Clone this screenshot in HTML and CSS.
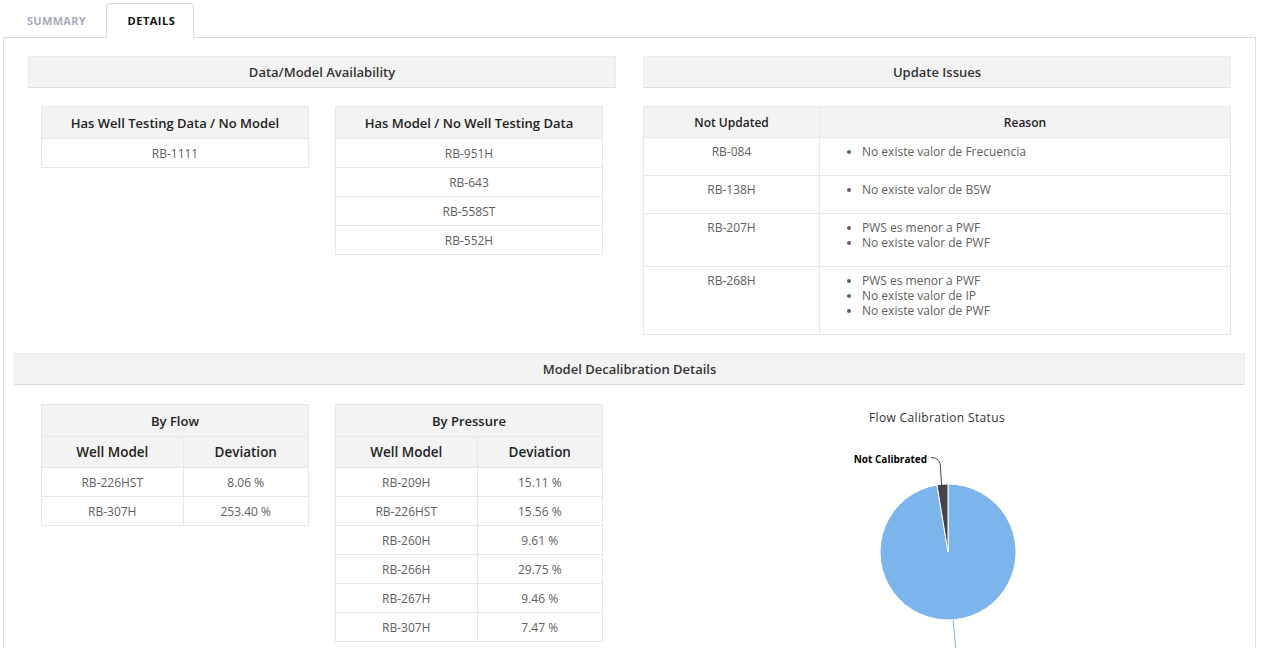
FILE: index.html
```html
<!DOCTYPE html>
<html>
<head>
<meta charset="utf-8">
<title>Details</title>
<link rel="stylesheet" href="styles.css">
</head>
<body>
<div class="page">
  <ul class="tabs">
    <li class="tab">Summary</li>
    <li class="tab active">Details</li>
  </ul>
  <div class="panel">
    <div class="top-row">
      <section class="half">
        <div class="section-head">Data/Model Availability</div>
        <div class="pair">
          <div class="sub">
            <table class="grid">
              <tr><th>Has Well Testing Data / No Model</th></tr>
              <tr><td>RB-1111</td></tr>
            </table>
          </div>
          <div class="sub">
            <table class="grid">
              <tr><th>Has Model / No Well Testing Data</th></tr>
              <tr><td>RB-951H</td></tr>
              <tr><td>RB-643</td></tr>
              <tr><td>RB-558ST</td></tr>
              <tr><td>RB-552H</td></tr>
            </table>
          </div>
        </div>
      </section>
      <section class="half">
        <div class="section-head">Update Issues</div>
        <table class="grid issues">
          <tr><th class="c-well">Not Updated</th><th>Reason</th></tr>
          <tr>
            <td>RB-084</td>
            <td class="reason"><ul><li>No existe valor de Frecuencia</li></ul></td>
          </tr>
          <tr>
            <td>RB-138H</td>
            <td class="reason"><ul><li>No existe valor de BSW</li></ul></td>
          </tr>
          <tr>
            <td>RB-207H</td>
            <td class="reason"><ul><li>PWS es menor a PWF</li><li>No existe valor de PWF</li></ul></td>
          </tr>
          <tr>
            <td>RB-268H</td>
            <td class="reason"><ul><li>PWS es menor a PWF</li><li>No existe valor de IP</li><li>No existe valor de PWF</li></ul></td>
          </tr>
        </table>
      </section>
    </div>

    <div class="section-head wide-head">Model Decalibration Details</div>

    <div class="decal-row">
      <div class="sub">
        <table class="grid dev">
          <tr><th colspan="2">By Flow</th></tr>
          <tr class="sub-head"><th class="c-model">Well Model</th><th>Deviation</th></tr>
          <tr><td>RB-226HST</td><td>8.06 %</td></tr>
          <tr><td>RB-307H</td><td>253.40 %</td></tr>
        </table>
      </div>
      <div class="sub">
        <table class="grid dev">
          <tr><th colspan="2">By Pressure</th></tr>
          <tr class="sub-head"><th class="c-model">Well Model</th><th>Deviation</th></tr>
          <tr><td>RB-209H</td><td>15.11 %</td></tr>
          <tr><td>RB-226HST</td><td>15.56 %</td></tr>
          <tr><td>RB-260H</td><td>9.61 %</td></tr>
          <tr><td>RB-266H</td><td>29.75 %</td></tr>
          <tr><td>RB-267H</td><td>9.46 %</td></tr>
          <tr><td>RB-307H</td><td>7.47 %</td></tr>
        </table>
      </div>
      <div class="chart-col">
        <svg class="chart" width="616" height="250" viewBox="0 0 616 250">
          <text class="chart-title" x="308" y="18" text-anchor="middle">Flow Calibration Status</text>
          <path d="M319 148 L319 80 A68 68 0 1 1 308.0 80.9 Z" fill="#7cb5ec" stroke="#ffffff" stroke-width="1"/>
          <path d="M319 148 L308.0 80.9 A68 68 0 0 1 319 80 Z" fill="#434348" stroke="#ffffff" stroke-width="1"/>
          <path d="M302 53.5 C309 54 311.5 57 311.5 64 L312.5 81" fill="none" stroke="#434348" stroke-width="1"/>
          <path d="M324 216 L327 246" fill="none" stroke="#7cb5ec" stroke-width="1"/>
          <text class="chart-label" x="298" y="59" text-anchor="end">Not Calibrated</text>
        </svg>
      </div>
    </div>
  </div>
</div>
</body>
</html>
```

FILE: styles.css
```css
* {
  box-sizing: border-box;
}

html {
  overflow: hidden;
}

body {
  margin: 0;
  background: #ffffff;
  color: #333333;
  font-family: "Open Sans", "Liberation Sans", sans-serif;
}

.page {
  padding: 3px 5px 0 3px;
}

/* Tabs */
.tabs {
  list-style: none;
  margin: 0;
  padding: 0 0 0 3px;
  display: flex;
  position: relative;
  z-index: 1;
}

.tab {
  height: 35px;
  margin-bottom: -1px;
  padding: 0 20px;
  display: flex;
  align-items: center;
  justify-content: center;
  font-size: 11px;
  font-weight: 700;
  letter-spacing: 0.3px;
  text-transform: uppercase;
  color: #a3abbb;
  border: 1px solid transparent;
  border-radius: 4px 4px 0 0;
}

.tab.active {
  width: 88px;
  margin-left: -1px;
  padding: 0 0 0 3px;
  letter-spacing: 0.5px;
  color: #111111;
  background: #ffffff;
  border-color: #dddddd;
  border-bottom-color: #ffffff;
}

/* Panel */
.panel {
  border: 1px solid #dddddd;
  min-height: 640px;
}

.top-row {
  display: flex;
  gap: 27px;
  padding: 18px 24px 0 24px;
}

.half {
  width: 588px;
}

.section-head {
  height: 32px;
  background: #f3f3f3;
  border: 1px solid #ececec;
  border-bottom-color: #e0e0e0;
  text-align: center;
  font-size: 13px;
  font-weight: 600;
  line-height: 30px;
  color: #333333;
}

.wide-head {
  margin: 18px 10px 0 10px;
  border-bottom-color: #d9d9d9;
}

.pair {
  display: flex;
  margin-top: 18px;
}

.sub {
  width: 294px;
  padding: 0 13px;
}

/* Tables */
.grid {
  width: 100%;
  border-collapse: collapse;
}

.grid th,
.grid td {
  border: 1px solid #e8e8e8;
  text-align: center;
  padding: 0 8px;
}

.grid th {
  height: 32px;
  background: #f3f3f3;
  font-size: 13px;
  font-weight: 600;
  color: #222222;
}

.grid td {
  height: 29px;
  font-size: 12px;
  color: #606060;
}

.issues {
  margin-top: 18px;
}

.issues th {
  height: 31px;
  font-size: 12px;
}

.issues .c-well {
  width: 176px;
}

.issues td {
  vertical-align: top;
  padding-top: 6px;
  line-height: 15px;
  height: auto;
}

.issues td.reason {
  text-align: left;
}

.issues ul {
  margin: 0 0 16px 0;
  padding-left: 34px;
}

.dev .sub-head th {
  height: 31px;
  font-size: 13.5px;
}

.dev .c-model {
  width: 53%;
}

/* Chart */
.decal-row {
  display: flex;
  margin-top: 19px;
  padding-left: 24px;
}

.chart-col {
  flex: 1;
  margin: 0 10px 0 13px;
}

.chart {
  display: block;
  overflow: visible;
}

.chart-title {
  font-family: "Open Sans", "Liberation Sans", sans-serif;
  font-size: 12px;
  letter-spacing: 0.35px;
  fill: #333333;
}

.chart-label {
  font-family: "Open Sans", "Liberation Sans", sans-serif;
  font-size: 10px;
  font-weight: 700;
  fill: #000000;
}
```
